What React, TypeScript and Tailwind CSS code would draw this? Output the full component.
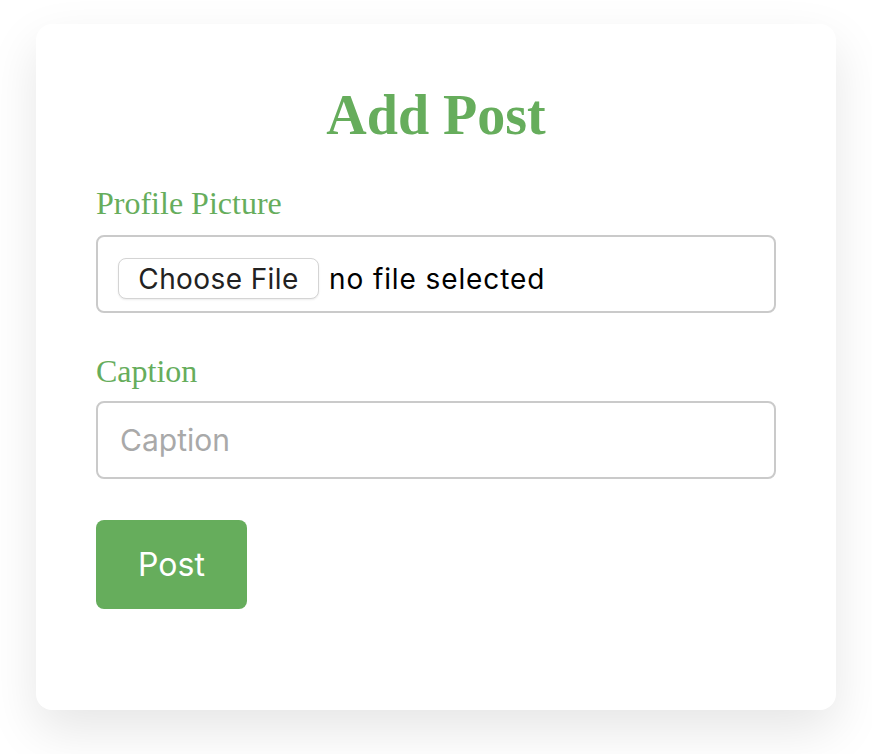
import React from "react";

export default function App() {
  return (
    <div className="min-h-screen bg-white pt-6">
      <div className="mx-auto h-[686px] w-[800px] rounded-2xl bg-white px-[60px] pt-[60px] shadow-[0_20px_50px_rgba(0,0,0,0.10)]">
        <h2 className="text-center font-['Liberation_Serif','Times_New_Roman',serif] text-[56px] font-bold leading-[62px] text-[#66ad5c]">
          Add Post
        </h2>

        <form className="mt-[40px]" onSubmit={(e) => e.preventDefault()}>
          <label className="mb-[14px] block font-['Liberation_Serif','Times_New_Roman',serif] text-[32px] leading-[35px] text-[#66ad5c]">
            Profile Picture
          </label>
          <div className="flex h-[78px] w-full items-center rounded-lg border-2 border-[#cacaca] bg-white pl-[20px] pt-[9px] font-['Inter','Liberation_Sans',Arial,sans-serif]">
            <button
              type="button"
              className="flex h-[41px] w-[201px] items-center justify-center rounded-lg border border-[#d4d4d4] bg-white text-[28px] tracking-[0.4px] text-[#222] shadow-[0_1px_2px_rgba(0,0,0,0.08)]"
            >
              Choose File
            </button>
            <span className="ml-[10px] text-[28px] tracking-[0.9px] text-black">
              no file selected
            </span>
          </div>

          <label className="mb-[12px] mt-[41px] block font-['Liberation_Serif','Times_New_Roman',serif] text-[32px] leading-[35px] text-[#66ad5c]">
            Caption
          </label>
          <input
            type="text"
            placeholder="Caption"
            className="block h-[78px] w-full rounded-lg border-2 border-[#cacaca] bg-white px-[22px] font-['Inter','Liberation_Sans',Arial,sans-serif] text-[30px] text-black outline-none placeholder:text-[#a9a9a9]"
          />

          <button
            type="submit"
            className="mt-[41px] flex h-[89px] w-[151px] items-center justify-center rounded-lg bg-[#66ad5c] font-['Inter','Liberation_Sans',Arial,sans-serif] text-[32px] text-white"
          >
            Post
          </button>
        </form>
      </div>
    </div>
  );
}
